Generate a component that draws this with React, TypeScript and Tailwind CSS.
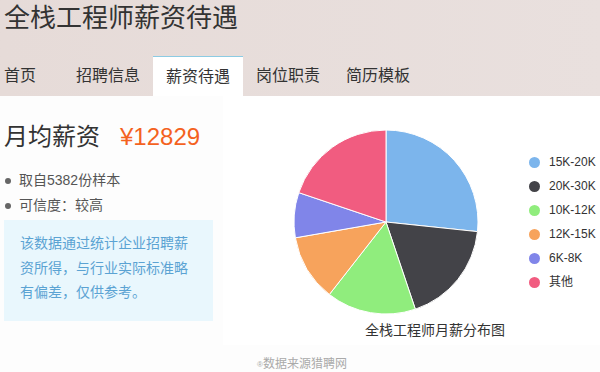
import { useMemo } from 'react'

const FONT = '"Liberation Sans","Noto Sans CJK SC",sans-serif'

const slices = [
  { label: '15K-20K', deg: 96, color: '#7cb5ec' },
  { label: '20K-30K', deg: 65.4, color: '#434348' },
  { label: '10K-12K', deg: 56.6, color: '#90ed7d' },
  { label: '12K-15K', deg: 42.1, color: '#f7a35c' },
  { label: '6K-8K', deg: 28.5, color: '#8085e9' },
  { label: '其他', deg: 71.4, color: '#f15c80' }
]

const tabs = ['首页', '招聘信息', '薪资待遇', '岗位职责', '简历模板']

function Pie() {
  const r = 92
  const c = 93
  const paths = useMemo(() => {
    let start = 0
    return slices.map(s => {
      const end = start + s.deg
      const a0 = (start * Math.PI) / 180
      const a1 = (end * Math.PI) / 180
      const x0 = c + r * Math.sin(a0)
      const y0 = c - r * Math.cos(a0)
      const x1 = c + r * Math.sin(a1)
      const y1 = c - r * Math.cos(a1)
      const large = s.deg > 180 ? 1 : 0
      start = end
      return {
        d: `M${c},${c} L${x0},${y0} A${r},${r} 0 ${large} 1 ${x1},${y1} Z`,
        color: s.color
      }
    })
  }, [])

  return (
    <svg width={186} height={186} viewBox="0 0 186 186">
      {paths.map((p, i) => (
        <path key={i} d={p.d} fill={p.color} stroke="#fff" strokeWidth={1} strokeLinejoin="round" />
      ))}
    </svg>
  )
}

export default function App() {
  return (
    <div className="w-[600px] h-[372px] overflow-hidden bg-[#fdfdfd] text-[#333]" style={{ fontFamily: FONT }}>
      {/* Header */}
      <div className="h-[96px] bg-gradient-to-r from-[#e6dbd8] to-[#e9e0de]">
        <h1 className="h-[36px] pl-1 text-[26px] leading-[36px] text-[#333] font-normal">
          全栈工程师薪资待遇
        </h1>
        <div className="mt-[20px] flex h-[40px]">
          {tabs.map((t, i) => (
            <div
              key={t}
              className={
                i === 0
                  ? 'w-[63px] pl-1 text-[16px] leading-[40px]'
                  : i === 2
                    ? 'w-[90px] text-center text-[16px] leading-[39px] bg-white border-t border-[#8ccbe3]'
                    : 'w-[90px] text-center text-[16px] leading-[40px]'
              }
            >
              {t}
            </div>
          ))}
        </div>
      </div>

      {/* Main */}
      <div className="flex">
        <div className="w-[213px] pl-1 pt-[25px]">
          <div className="flex items-center h-[32px] text-[24px] leading-[32px]">
            <span className="text-[#333]">月均薪资</span>
            <span className="ml-[20px] text-[#f4621f]">¥12829</span>
          </div>
          <ul className="mt-[15px] text-[14px] leading-[25px] text-[#555]">
            <li className="flex items-center">
              <span className="ml-[1px] mr-[8px] h-[6px] w-[6px] rounded-full bg-[#666]" />
              取自5382份样本
            </li>
            <li className="flex items-center">
              <span className="ml-[1px] mr-[8px] h-[6px] w-[6px] rounded-full bg-[#666]" />
              可信度：较高
            </li>
          </ul>
          <div className="mt-[2px] h-[101px] bg-[#e9f7fd] px-4 pt-[11px] text-[14px] leading-[24.5px] text-[#5ba3d3]">
            该数据通过统计企业招聘薪资所得，与行业实际标准略有偏差，仅供参考。
          </div>
        </div>

        <div className="ml-[10px] flex-1 bg-white h-[249px]">
          <div className="flex items-center pt-[33px]">
            <div className="ml-[70px]">
              <Pie />
            </div>
            <ul className="ml-[50px] text-[12px] leading-[24px] text-[#333]">
              {slices.map(s => (
                <li key={s.label} className="flex items-center">
                  <span className="mr-[9px] h-[11px] w-[11px] rounded-full" style={{ backgroundColor: s.color }} />
                  {s.label}
                </li>
              ))}
            </ul>
          </div>
          <div className="ml-[142px] mt-[5px] text-[14px] leading-[20px] text-[#333]">
            全栈工程师月薪分布图
          </div>
        </div>
      </div>

      {/* Footer */}
      <div className="pl-[257px] pt-[11px] text-[12px] leading-[16px] text-[#aaa]">
        <span className="text-[8px] align-middle">®</span>数据来源猎聘网
      </div>
    </div>
  )
}
